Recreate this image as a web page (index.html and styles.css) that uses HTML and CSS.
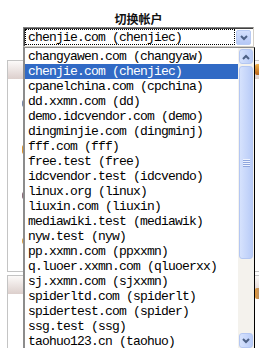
FILE: index.html
```html
<!DOCTYPE html>
<html>
<head>
    <title>切换帐户</title>
    <link rel="stylesheet" href="styles.css">
</head>
<body>
    <div class="page">
        <div class="switcher">
            <div class="switcher-title">切换帐户</div>
            <div class="combo">
                <div class="combo-value">chenjie.com (chenjiec)</div>
                <div class="combo-btn">
                    <svg width="8" height="6" viewBox="0 0 8 6"><polyline points="1,1 4,4 7,1" /></svg>
                </div>
            </div>
        </div>

        <!-- page behind the popup, mostly covered -->
        <div class="panels">
            <div class="panel panel-top">
                <div class="panel-head"><span class="head-icon"></span></div>
                <div class="panel-body">
                    <div class="panel-row"><span class="row-icon icon-slate"></span></div>
                    <div class="panel-row"><span class="row-icon icon-orange"></span></div>
                    <div class="panel-row"><span class="row-icon icon-plum"></span></div>
                    <div class="panel-row"><span class="row-icon icon-amber"></span></div>
                </div>
            </div>
            <div class="panel">
                <div class="panel-head"><span class="head-icon head-icon-low"></span></div>
                <div class="panel-body"></div>
            </div>
        </div>

        <!-- open dropdown list -->
        <div class="listbox">
            <ul class="list-items">
                <li>changyawen.com (changyaw)</li>
                <li class="selected">chenjie.com (chenjiec)</li>
                <li>cpanelchina.com (cpchina)</li>
                <li>dd.xxmn.com (dd)</li>
                <li>demo.idcvendor.com (demo)</li>
                <li>dingminjie.com (dingminj)</li>
                <li>fff.com (fff)</li>
                <li>free.test (free)</li>
                <li>idcvendor.test (idcvendo)</li>
                <li>linux.org (linux)</li>
                <li>liuxin.com (liuxin)</li>
                <li>mediawiki.test (mediawik)</li>
                <li>nyw.test (nyw)</li>
                <li>pp.xxmn.com (ppxxmn)</li>
                <li>q.luoer.xxmn.com (qluoerxx)</li>
                <li>sj.xxmn.com (sjxxmn)</li>
                <li>spiderltd.com (spiderlt)</li>
                <li>spidertest.com (spider)</li>
                <li>ssg.test (ssg)</li>
                <li>taohuo123.cn (taohuo)</li>
            </ul>
            <div class="scrollbar">
                <div class="sb-btn">
                    <svg width="8" height="6" viewBox="0 0 8 6"><polyline points="1,5 4,2 7,5" /></svg>
                </div>
                <div class="sb-thumb"><span class="sb-grip"></span></div>
                <div class="sb-track"></div>
                <div class="sb-btn sb-btn-down">
                    <svg width="8" height="6" viewBox="0 0 8 6"><polyline points="1,1 4,4 7,1" /></svg>
                </div>
            </div>
        </div>
    </div>
</body>
</html>
```

FILE: styles.css
```css
html, body { margin: 0; background: #fff; }
.page { position: relative; width: 259px; height: 348px; overflow: hidden; font-family: "Liberation Mono", monospace; }

/* account switcher */
.switcher { width: 231px; margin-left: 23px; padding-top: 10px; }
.switcher-title { height: 17px; line-height: 17px; text-align: center; font: bold 12px "Noto Sans CJK SC", sans-serif; color: #111; }
.combo { display: flex; box-sizing: border-box; width: 231px; height: 20px; padding: 1px; border: 1px solid; border-color: #808080 #d4d0c8 #d4d0c8 #808080; box-shadow: inset 1px 1px #404040; background: #fff; }
.combo-value { width: 210px; height: 16px; box-sizing: border-box; border: 1px dotted #000; padding-left: 2px; line-height: 15px; font-size: 13px; letter-spacing: -0.8px; color: #000; white-space: nowrap; }
.combo-btn { width: 15px; height: 15px; margin: 1px 0 0 1px; box-sizing: border-box; border: 1px solid #b9cbf3; border-radius: 2px; background: linear-gradient(#d4e0fd, #b5c8f6); display: flex; align-items: center; justify-content: center; }
svg polyline { fill: none; stroke: #4d6185; stroke-width: 2; }

/* background page */
.panels { width: 300px; margin-top: 13px; padding-left: 7px; }
.panel { border: 1px solid #c4c4c4; background: #fff; }
.panel + .panel { margin-top: 3px; }
.panel-top { height: 210px; }
.panel-head { display: flex; align-items: flex-start; height: 18px; background: linear-gradient(#fcfaf9, #dccfcc); }
.head-icon { width: 14px; height: 11px; margin: 3px 0 0 247px; border-radius: 2px; background: linear-gradient(#f2b24c, #b8641a); }
.head-icon-low { margin-top: 12px; background: linear-gradient(to right, #e49a3a, #5a7cc8); }
.panel-body { height: 192px; padding-top: 1px; }
.panel-row { display: flex; align-items: center; height: 46px; padding-left: 14px; }
.row-icon { width: 12px; height: 9px; border-radius: 2px; }
.icon-slate { height: 7px; background: #7886a6; }
.icon-orange { background: #dc9530; }
.icon-plum { height: 7px; background: #8a6c7a; }
.icon-amber { height: 6px; background: #d9a24a; }

/* dropdown popup */
.listbox { position: absolute; left: 23px; top: 47px; display: flex; width: 232px; height: 303px; box-sizing: border-box; border-left: 2px solid #8c8c8c; border-top: 1px solid #8c8c8c; border-right: 1px solid #000; border-bottom: 1px solid #000; background: #fff; }
.list-items { list-style: none; margin: 0; padding: 1px 0 0; width: 213px; }
.list-items li { height: 15px; line-height: 15px; padding-left: 3px; font-size: 13px; letter-spacing: -0.8px; white-space: nowrap; color: #000; }
.list-items li.selected { background: #316ac5; color: #fff; }

.scrollbar { display: flex; flex-direction: column; width: 16px; background: #f4f2ed; }
.sb-btn { display: flex; align-items: center; justify-content: center; height: 15px; margin: 1px 1px 0; box-sizing: border-box; border: 1px solid #b4c7f2; border-radius: 3px; background: linear-gradient(to right, #d6e2fd, #b9ccf8); }
.sb-btn-down { margin: 0 1px 1px; }
.sb-thumb { display: flex; align-items: center; justify-content: center; height: 193px; margin: 2px 1px 0; box-sizing: border-box; border: 1px solid #b4c7f2; border-radius: 3px; background: linear-gradient(to right, #d6e2fd, #b9ccf8); }
.sb-grip { width: 7px; height: 8px; background: repeating-linear-gradient(#eef3ff 0 1px, #8fa6de 1px 2px); }
.sb-track { flex: 1; }
```
